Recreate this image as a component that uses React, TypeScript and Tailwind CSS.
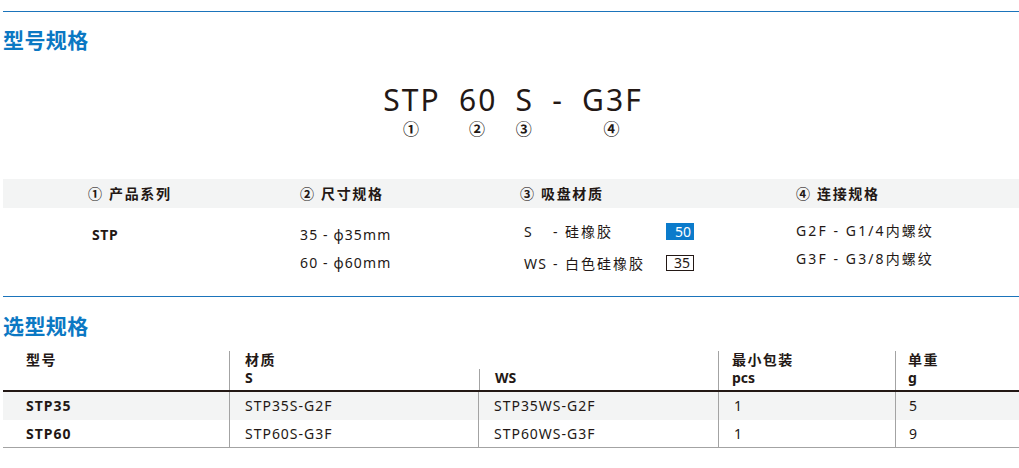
import React from "react";

const font = { fontFamily: '"Noto Sans", "Noto Sans CJK SC", sans-serif' };

const codeParts = [
  { text: "STP", num: "①" },
  { text: "60", num: "②" },
  { text: "S", num: "③" },
  { text: "-", num: "" },
  { text: "G3F", num: "④" },
];

const rows = [
  { model: "STP35", s: "STP35S-G2F", ws: "STP35WS-G2F", pcs: "1", g: "5" },
  { model: "STP60", s: "STP60S-G3F", ws: "STP60WS-G3F", pcs: "1", g: "9" },
];

function SectionLine() {
  return <div className="h-px bg-[#1b74bb]" />;
}

function SectionTitle({ children }: { children: React.ReactNode }) {
  return (
    <h2 className="text-[21px] leading-[28px] font-bold text-[#0b78c3] tracking-[0.02em]">
      {children}
    </h2>
  );
}

export default function App() {
  return (
    <div className="w-[1019px] h-[468px] bg-white pl-[3px] pt-[11px] text-[#231815]" style={font}>
      <SectionLine />
      <div className="mt-[14px]">
        <SectionTitle>型号规格</SectionTitle>
      </div>

      {/* Model code */}
      <div className="mt-[28px] flex justify-center gap-[16px] pl-[2px]">
        {codeParts.map((p, i) => (
          <div key={i} className="flex flex-col items-center">
            <span className="text-[30px] leading-[36px] tracking-[0.07em] pl-[0.07em]">{p.text}</span>
            <span className="mt-[2px] text-[16px] leading-[18px] font-semibold">{p.num || "\u00a0"}</span>
          </div>
        ))}
      </div>

      {/* Spec header band */}
      <div className="mt-[41px] h-[29px] bg-[#f3f4f4] flex items-center pl-[85px] text-[14px] font-bold tracking-[0.12em]">
        <div className="w-[212px]">① 产品系列</div>
        <div className="w-[220px]">② 尺寸规格</div>
        <div className="w-[276px]">③ 吸盘材质</div>
        <div>④ 连接规格</div>
      </div>

      {/* Spec body */}
      <div className="h-[88px] flex pl-[85px] text-[14px] tracking-[0.08em]">
        <div className="w-[212px] pt-[13px] pl-[4px] leading-[28px] font-bold tracking-[0.04em]">STP</div>
        <div className="w-[220px] pt-[13px] leading-[28px]">
          <div>35 - ϕ35mm</div>
          <div>60 - ϕ60mm</div>
        </div>
        <div className="w-[276px] pt-[7px] pl-[4px]">
          <div className="flex items-center h-[32px]">
            <span className="w-[29px]">S</span>
            <span className="w-[113px] tracking-[0.14em]">- 硅橡胶</span>
            <span className="w-[28px] h-[17px] bg-[#0b7bcb] text-white text-right pr-[3px] leading-[17px] tracking-normal">
              50
            </span>
          </div>
          <div className="flex items-center h-[32px]">
            <span className="w-[29px]">WS</span>
            <span className="w-[113px] tracking-[0.14em]">- 白色硅橡胶</span>
            <span className="w-[28px] h-[16px] border border-[#231815] text-right pr-[3px] leading-[14px] tracking-normal">
              35
            </span>
          </div>
        </div>
        <div className="pt-[9px] leading-[28px] tracking-[0.15em]">
          <div>G2F - G1/4内螺纹</div>
          <div>G3F - G3/8内螺纹</div>
        </div>
      </div>

      <SectionLine />
      <div className="mt-[15px]">
        <SectionTitle>选型规格</SectionTitle>
      </div>

      {/* Selection table */}
      <div className="mt-[11px] text-[14px]">
        <div className="flex h-[41px] font-bold leading-[18px] border-b-2 border-[#231815]">
          <div className="w-[226px] pl-[23px] tracking-[0.1em]">型号</div>
          <div className="w-[489px] border-l border-[#a3a3a3] flex flex-col">
            <div className="pl-[15px] tracking-[0.1em]">材质</div>
            <div className="flex flex-1">
              <div className="w-[249px] pl-[15px]">S</div>
              <div className="flex-1 border-l border-[#a3a3a3] pl-[15px]">WS</div>
            </div>
          </div>
          <div className="w-[177px] border-l border-[#a3a3a3] pl-[13px]">
            <div className="tracking-[0.1em]">最小包装</div>
            <div>pcs</div>
          </div>
          <div className="flex-1 border-l border-[#a3a3a3] pl-[12px]">
            <div className="tracking-[0.1em]">单重</div>
            <div>g</div>
          </div>
        </div>
        {rows.map((r, i) => (
          <div
            key={r.model}
            className={`flex h-[28px] items-stretch leading-[28px] tracking-[0.07em] ${
              i === 0 ? "bg-[#f3f4f4]" : "bg-white border-b border-[#a3a3a3]"
            }`}
          >
            <div className="w-[226px] pl-[23px] font-bold">{r.model}</div>
            <div className="w-[249px] border-l border-[#a3a3a3] pl-[15px]">{r.s}</div>
            <div className="w-[240px] border-l border-[#a3a3a3] pl-[15px]">{r.ws}</div>
            <div className="w-[177px] border-l border-[#a3a3a3] pl-[15px]">{r.pcs}</div>
            <div className="flex-1 border-l border-[#a3a3a3] pl-[13px]">{r.g}</div>
          </div>
        ))}
      </div>
    </div>
  );
}
